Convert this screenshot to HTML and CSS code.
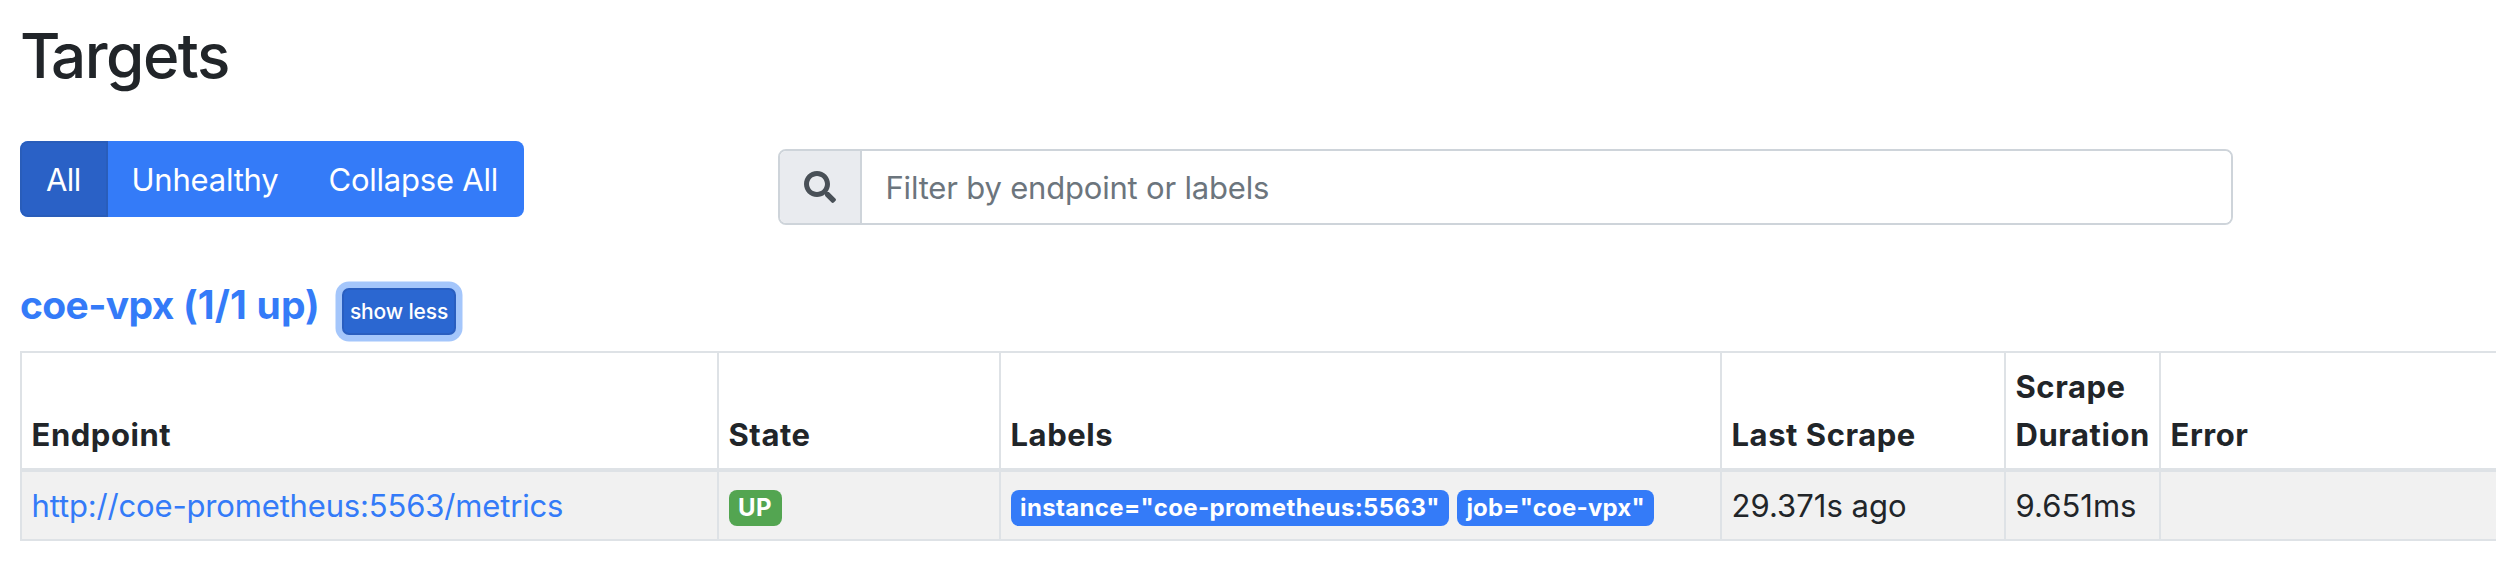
FILE: index.html
```
<!DOCTYPE html>
<html lang="en">
<head>
<meta charset="utf-8">
<title>Targets</title>
<link rel="stylesheet" href="styles.css">
</head>
<body>
<main class="page">
  <h2 class="title"><span class="title-cap">T</span>argets</h2>
  <div class="toolbar">
    <div class="btn-group">
      <button class="btn btn-all">All</button>
      <button class="btn btn-unhealthy">Unhealthy</button>
      <button class="btn btn-collapse">Collapse All</button>
    </div>
    <div class="search">
      <span class="search-icon">
        <svg viewBox="0 0 512 512" width="32" height="32"><path fill="currentColor" d="M505 442.7L405.3 343c-4.500-4.500-10.600-7-17-7H372c27.600-35.300 44-79.700 44-128C416 93.100 322.900 0 208 0S0 93.100 0 208s93.100 208 208 208c48.300 0 92.700-16.400 128-44v16.300c0 6.400 2.500 12.500 7 17l99.700 99.700c9.400 9.400 24.600 9.400 33.900 0l28.300-28.300c9.400-9.400 9.400-24.600.1-34zM208 336c-70.700 0-128-57.200-128-128 0-70.700 57.200-128 128-128 70.700 0 128 57.200 128 128 0 70.700-57.200 128-128 128z"/></svg>
      </span>
      <input class="search-input" type="text" placeholder="Filter by endpoint or labels">
    </div>
  </div>
  <div class="pool-head">
    <h3 class="pool-name"><span class="pool-job">coe-vpx</span> (1/1 up)</h3>
    <button class="toggle">show less</button>
  </div>
  <table class="targets">
    <colgroup><col class="c-endpoint"><col class="c-state"><col class="c-labels"><col class="c-last"><col class="c-duration"><col class="c-error"></colgroup>
    <thead>
      <tr><th>Endpoint</th><th>State</th><th>Labels</th><th>Last Scrape</th><th>Scrape Duration</th><th>Error</th></tr>
    </thead>
    <tbody>
      <tr>
        <td><a class="link">http://coe-prometheus:5563/metrics</a></td>
        <td><div class="badges"><span class="badge up">UP</span></div></td>
        <td><div class="badges"><span class="badge instance">instance="coe-prometheus:5563"</span><span class="badge">job="coe-vpx"</span></div></td>
        <td>29.371s ago</td>
        <td>9.651ms</td>
        <td></td>
      </tr>
    </tbody>
  </table>
</main>
</body>
</html>
```
FILE: styles.css
```
* { box-sizing: border-box; }
body {
  margin: 0;
  background: #fff;
  color: #212529;
  font-family: Inter, "Liberation Sans", sans-serif;
  font-size: 31px;
  line-height: 48px;
  overflow: hidden;
}
button, input { font: inherit; margin: 0; }
.page { padding: 18px 0 0 20px; }
.title {
  margin: 0 0 47px;
  font-size: 62px;
  font-weight: 500;
  line-height: 76px;
  letter-spacing: -1.5px;
}
.title-cap { letter-spacing: -9.500px; }
.toolbar { display: flex; align-items: flex-start; height: 84px; }
.btn-group {
  display: flex;
  width: 504px;
  height: 76px;
  border-radius: 8px;
  overflow: hidden;
  background: #347bf8;
}
.btn {
  border: 0;
  padding: 1px 0 0;
  background: transparent;
  color: #fff;
  text-align: left;
  white-space: nowrap;
  letter-spacing: -0.22px;
}
.btn-all {
  width: 88px;
  padding-left: 24px;
  background: #2a61c6;
  border: 2px solid #295dba;
  border-radius: 8px 0 0 8px;
  letter-spacing: -0.6px;
}
.btn-unhealthy { width: 196px; padding-left: 23.500px; }
.btn-collapse { width: 220px; padding-left: 24.500px; }
.search {
  display: flex;
  width: 1455px;
  height: 76px;
  margin: 8px 0 0 254px;
  border: 2px solid #ced4da;
  border-radius: 8px;
  overflow: hidden;
}
.search-icon {
  display: flex;
  align-items: center;
  width: 82px;
  padding-left: 24px;
  background: #e9ebef;
  border-right: 2px solid #ced4da;
  color: #495057;
}
.search-input {
  flex: 1;
  border: 0;
  padding: 1px 24px 0 23.500px;
  background: #fff;
  letter-spacing: -0.19px;
  outline: 0;
}
.search-input::placeholder { color: #6c757d; opacity: 1; }
.pool-head { display: flex; align-items: flex-start; height: 70px; margin-top: 56px; }
.pool-name {
  width: 322px;
  margin: 0;
  color: #347bf8;
  font-size: 39px;
  font-weight: 700;
  letter-spacing: 0.15px;
  white-space: nowrap;
}
.pool-job { letter-spacing: -0.65px; }
.toggle {
  width: 114px;
  height: 47px;
  margin-top: 7px;
  padding: 0;
  border: 2px solid #295ec0;
  border-radius: 7px;
  background: #2b67d1;
  box-shadow: 0 0 0 6.500px #a4c6fb;
  color: #fff;
  font-size: 21px;
  font-weight: 500;
  letter-spacing: -0.15px;
  line-height: 43px;
}
.targets {
  width: 2539px;
  table-layout: fixed;
  border-collapse: separate;
  border-spacing: 0;
}
.c-endpoint { width: 697px; }
.c-state { width: 282px; }
.c-labels { width: 721px; }
.c-last { width: 284px; }
.c-duration { width: 155px; }
.c-error { width: 400px; }
.targets th, .targets td {
  padding: 9.500px 0 9.500px 9.500px;
  border-left: 2px solid #dee2e6;
  text-align: left;
}
.targets th {
  height: 121px;
  border-top: 2px solid #dee2e6;
  border-bottom: 4px solid #dee2e6;
  vertical-align: bottom;
  font-weight: 700;
  letter-spacing: 0.55px;
}
.targets td {
  height: 69px;
  border-bottom: 2px solid #dee2e6;
  background: #f1f1f1;
  vertical-align: top;
  letter-spacing: 0.03px;
}
.link { color: #347bf8; letter-spacing: -0.16px; }
.badges { display: flex; align-items: center; gap: 8px; height: 48px; padding-top: 5px; }
.badge {
  height: 36px;
  padding: 0 9.600px;
  border-radius: 8px;
  background: #347bf8;
  color: #fff;
  font-size: 24px;
  font-weight: 700;
  line-height: 36px;
  letter-spacing: 0.19px;
}
.badge.instance { padding-right: 9px; letter-spacing: 0.35px; }
.badge.up { background: #53a551; letter-spacing: 0.4px; }
```
